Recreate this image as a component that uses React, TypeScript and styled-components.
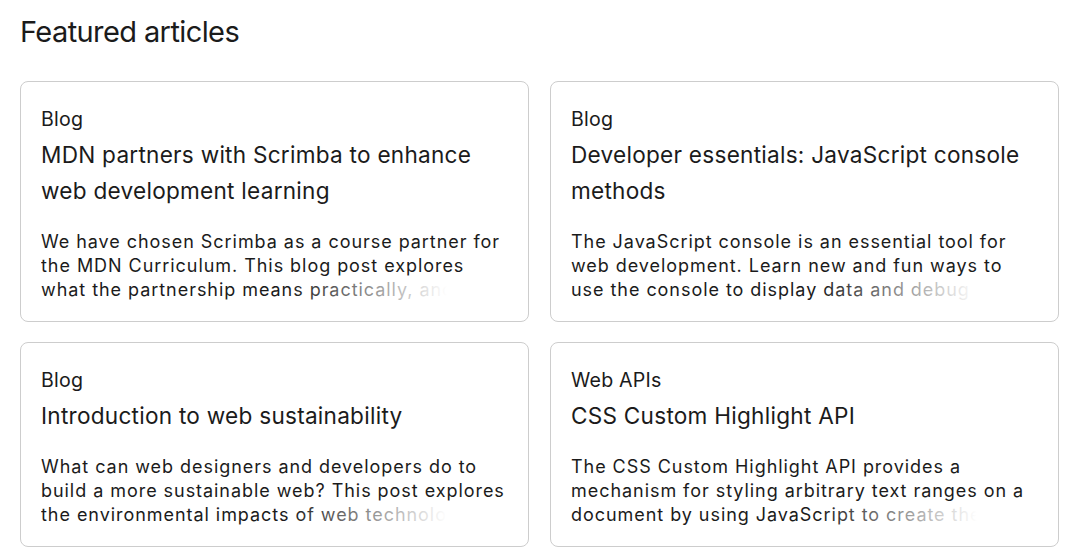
import React from 'react'
import styled, { createGlobalStyle } from 'styled-components'

const GlobalStyle = createGlobalStyle`
  body {
    margin: 0;
    background: #ffffff;
    color: #1b1b1b;
    font-family: Inter, "Noto Sans", sans-serif;
  }
`

const Section = styled.section`
  padding: 15px 19px 20px 20px;
`

const Heading = styled.h2`
  margin: 0 0 31px;
  font-size: 29px;
  line-height: 1.2;
  font-weight: 400;
  letter-spacing: -0.6px;
`

const Grid = styled.div`
  display: grid;
  grid-template-columns: 1fr 1fr;
  gap: 20px 21px;
`

const Card = styled.article`
  border: 1px solid #cdcdcd;
  border-radius: 8px;
  padding: 25px 20px 19px;
  display: flex;
  flex-direction: column;
`

const Tag = styled.span`
  font-size: 19.6px;
  line-height: 24px;
  letter-spacing: 0.2px;
`

const Title = styled.h3`
  margin: 6px 0 21px;
  font-size: 22.6px;
  line-height: 36px;
  font-weight: 400;
  letter-spacing: 0.25px;
`

const Summary = styled.p`
  position: relative;
  margin: 0;
  font-size: 18px;
  line-height: 24px;
  letter-spacing: 0.95px;
  height: 72px;
  overflow: hidden;

  &::after {
    content: "";
    position: absolute;
    right: 0;
    bottom: 0;
    width: 47%;
    height: 24px;
    background: linear-gradient(to right, rgba(255, 255, 255, 0), #ffffff 72%);
  }
`

type Article = { tag: string; title: string; summary: string }

const articles: Article[] = [
  {
    tag: 'Blog',
    title: 'MDN partners with Scrimba to enhance web development learning',
    summary:
      'We have chosen Scrimba as a course partner for the MDN Curriculum. This blog post explores what the partnership means practically, and how we will offer a world-class web development learning experience.',
  },
  {
    tag: 'Blog',
    title: 'Developer essentials: JavaScript console methods',
    summary:
      'The JavaScript console is an essential tool for web development. Learn new and fun ways to use the console to display data and debug your code.',
  },
  {
    tag: 'Blog',
    title: 'Introduction to web sustainability',
    summary:
      'What can web designers and developers do to build a more sustainable web? This post explores the environmental impacts of web technologies and looks at some of the ways we can build greener websites.',
  },
  {
    tag: 'Web APIs',
    title: 'CSS Custom Highlight API',
    summary:
      'The CSS Custom Highlight API provides a mechanism for styling arbitrary text ranges on a document by using JavaScript to create the ranges, and CSS to style them.',
  },
]

const App = () => {
  return (
    <>
      <GlobalStyle />
      <Section>
        <Heading>Featured articles</Heading>
        <Grid>
          {articles.map((a) => (
            <Card key={a.title}>
              <Tag>{a.tag}</Tag>
              <Title>{a.title}</Title>
              <Summary>{a.summary}</Summary>
            </Card>
          ))}
        </Grid>
      </Section>
    </>
  )
}

export default App
